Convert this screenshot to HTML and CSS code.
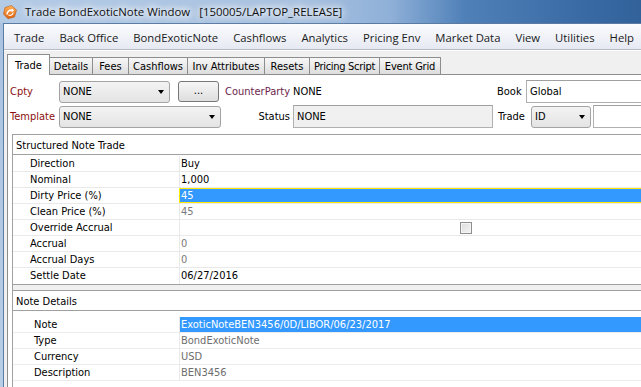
FILE: index.html
```html
<!DOCTYPE html>
<html>
<head>
<meta charset="utf-8">
<link rel="stylesheet" href="styles.css">
</head>
<body>
<div class="win">
  <div class="titlebar">
    <svg class="appicon" viewBox="0 0 16 16" width="16" height="16">
      <defs>
        <linearGradient id="og" x1="0" y1="0" x2="0" y2="1">
          <stop offset="0" stop-color="#ffb25a"/>
          <stop offset="1" stop-color="#e0620c"/>
        </linearGradient>
      </defs>
      <path d="M3 3.5 L9.5 1.5 L14.5 6 L12.5 13 L6 14.8 L1.5 10 Z" fill="url(#og)" stroke="#b85a10" stroke-width="0.6"/>
      <path d="M5 10.5 C5 7 8 5.5 11 6.5" fill="none" stroke="#fff" stroke-width="1.6"/>
      <path d="M10 4.6 L12.2 6.8 L9.4 8" fill="#fff"/>
      <path d="M11 8.5 C11 11 8.5 12 6.5 11" fill="none" stroke="#fff" stroke-width="1.2"/>
    </svg>
    <span class="title">Trade BondExoticNote Window</span>
    <span class="title2">[150005/LAPTOP_RELEASE]</span>
  </div>
  <div class="frame">
    <div class="client">
      <div class="menubar">
        <span>Trade</span><span>Back Office</span><span>BondExoticNote</span><span>Cashflows</span><span>Analytics</span><span>Pricing Env</span><span>Market Data</span><span>View</span><span>Utilities</span><span>Help</span>
      </div>
      <div class="tabarea">
        <div class="tabs">
          <div class="tab cur">Trade</div>
          <div class="tab">Details</div>
          <div class="tab">Fees</div>
          <div class="tab">Cashflows</div>
          <div class="tab">Inv Attributes</div>
          <div class="tab">Resets</div>
          <div class="tab">Pricing Script</div>
          <div class="tab last">Event Grid</div>
        </div>
        <div class="tabbody">
          <div class="form">
            <div class="frow">
              <span class="lbl red w49">Cpty</span>
              <div class="combo w111"><span>NONE</span><i class="arrow"></i></div>
              <div class="btn">...</div>
              <span class="lbl purple rlbl w74">CounterParty</span>
              <span class="val w204">NONE</span>
              <span class="lbl w29">Book</span>
              <div class="field white grow">Global</div>
            </div>
            <div class="frow">
              <span class="lbl red w49">Template</span>
              <div class="combo w162"><span>NONE</span><i class="arrow"></i></div>
              <span class="lbl rlbl w72">Status</span>
              <div class="field gray w200">NONE</div>
              <span class="lbl tlbl">Trade</span>
              <div class="combo w60"><span>ID</span><i class="arrow"></i></div>
              <div class="field white grow f2"></div>
            </div>
          </div>
          <div class="panels">
            <div class="panel p1">
              <div class="ptitle">Structured Note Trade</div>
              <div class="table t1">
                <div class="row"><div class="k">Direction</div><div class="v">Buy</div></div>
                <div class="row"><div class="k">Nominal</div><div class="v">1,000</div></div>
                <div class="row"><div class="k">Dirty Price (%)</div><div class="v selfocus">45</div></div>
                <div class="row"><div class="k">Clean Price (%)</div><div class="v dim">45</div></div>
                <div class="row"><div class="k">Override Accrual</div><div class="v center"><i class="check"></i></div></div>
                <div class="row"><div class="k">Accrual</div><div class="v dim">0</div></div>
                <div class="row"><div class="k">Accrual Days</div><div class="v dim">0</div></div>
                <div class="row"><div class="k">Settle Date</div><div class="v">06/27/2016</div></div>
              </div>
            </div>
            <div class="divider"></div>
            <div class="panel p2">
              <div class="ptitle">Note Details</div>
              <div class="table t2">
                <div class="row"><div class="k">Note</div><div class="v hl">ExoticNoteBEN3456/0D/LIBOR/06/23/2017</div></div>
                <div class="row"><div class="k">Type</div><div class="v dim2">BondExoticNote</div></div>
                <div class="row"><div class="k">Currency</div><div class="v dim2">USD</div></div>
                <div class="row"><div class="k">Description</div><div class="v dim2">BEN3456</div></div>
              </div>
            </div>
          </div>
        </div>
      </div>
    </div>
  </div>
</div>
</body>
</html>
```
FILE: styles.css
```css
* { box-sizing: border-box; }
html, body { margin: 0; padding: 0; }
body {
  width: 641px;
  height: 387px;
  overflow: hidden;
  background: #a9c3e0;
  font-family: "DejaVu Sans Condensed", "Liberation Sans", sans-serif;
  font-size: 11px;
  color: #000;
}
.win { width: 750px; }

.titlebar {
  height: 23px;
  display: flex;
  align-items: center;
  background: linear-gradient(to right, #b4cbe6 0%, #a9c2e0 40%, #8fb0d8 52%, #4f80b8 62%, #3a6aa3 78%, #2e5d96 90%, #3a6aa3 100%);
  font-family: "Open Sans", "Noto Sans", sans-serif;
  font-size: 11.4px;
  color: #111;
  white-space: nowrap;
}
.appicon { margin-left: 2px; flex: none; }
.title { margin-left: 7px; text-shadow: 0 0 6px #fff, 0 0 8px #fff, 0 0 10px #fff; }
.title2 { margin-left: 9px; text-shadow: 0 0 6px #fff, 0 0 8px #fff, 0 0 10px #fff; }

.frame { padding-left: 3px; background: linear-gradient(#a9c3e0, #b8cde6); }
.client {
  background: #f0f0f0;
  border-left: 1px solid #5b7ba3;
  border-top: 1px solid #5b7ba3;
  height: 364px;
}

.menubar {
  height: 26px;
  display: flex;
  align-items: center;
  gap: 15px;
  padding: 2px 0 0 10px;
  background: linear-gradient(#fbfcfe, #e6e9f2);
  border-bottom: 1px solid #b9bcc4;
  font-family: "Open Sans", "Noto Sans", sans-serif;
  font-size: 11.3px;
  color: #1a1a1a;
  white-space: nowrap;
}

.tabarea { padding: 3px 0 0 3px; border-top: 1px solid #fff; }
.tabs { display: flex; align-items: flex-end; height: 20px; position: relative; z-index: 1; }
.tab {
  height: 17px;
  padding-top: 1px;
  border: 1px solid #8d8d8d;
  border-right: none;
  border-bottom: none;
  background: linear-gradient(#f7f7f7, #dddddd);
  white-space: nowrap;
  line-height: 15px;
  color: #000;
  text-align: center;
  flex: none;
}
.tab:nth-child(2) { width: 42px; }
.tab:nth-child(3) { width: 36px; }
.tab:nth-child(4) { width: 59px; }
.tab:nth-child(5) { width: 77px; }
.tab:nth-child(6) { width: 45px; }
.tab:nth-child(7) { width: 70px; letter-spacing: -0.3px; }
.tab:nth-child(8) { width: 62px; letter-spacing: -0.2px; }
.tab.last { border-right: 1px solid #8d8d8d; }
.tab.cur {
  width: 43px;
  height: 21px;
  background: #fff;
  border-right: 1px solid #8d8d8d;
  padding-top: 3px;
  margin-bottom: -1px;
}
.tab.cur + .tab { border-left: none; }
.tabbody {
  background: #fff;
  border-top: 1px solid #8d8d8d;
  border-left: 1px solid #8d8d8d;
  height: 320px;
  padding: 5px 0 0 2px;
}

.form { display: flex; flex-direction: column; gap: 2px; }
.frow { display: flex; align-items: center; height: 23px; white-space: nowrap; }
.lbl { flex: none; }
.red { color: #8c0f0f; }
.purple { color: #6b1e4c; }
.rlbl { text-align: right; padding-right: 3px; }
.w49 { width: 49px; }
.w74 { width: 74px; }
.w72 { width: 72px; }
.w29 { width: 29px; }
.w111 { width: 111px; }
.w162 { width: 162px; }
.w60 { width: 60px; }
.w200 { width: 200px; }
.w204 { width: 204px; }
.tlbl { width: 38px; padding-left: 5px; }
.grow { flex: 1; }

.combo {
  flex: none;
  height: 22px;
  display: flex;
  align-items: center;
  justify-content: space-between;
  padding: 0 5px 0 3px;
  border: 1px solid #a3a3a3;
  border-radius: 3px;
  background: linear-gradient(#f3f3f3, #e4e4e4);
}
.arrow {
  width: 0; height: 0;
  border-left: 3.5px solid transparent;
  border-right: 3.5px solid transparent;
  border-top: 4px solid #000;
}
.btn {
  flex: none;
  width: 41px;
  height: 21px;
  margin-left: 8px;
  border: 1px solid #777;
  border-radius: 3px;
  background: linear-gradient(#f6f6f6, #dedede);
  text-align: center;
  line-height: 17px;
}
.val { flex: none; }
.field {
  height: 23px;
  display: flex;
  align-items: center;
  padding-left: 3px;
  border: 1px solid #b0b0b0;
  border-top-color: #a0a0a0;
}
.field.white { background: #fff; }
.field.gray { background: #f0f0f0; flex: none; }
.f2 { margin-left: 2px; }

.panels { padding: 6px 0 0 2px; }
.panel { border-left: 1px solid #a0a0a0; border-top: 1px solid #a0a0a0; background: #fff; }
.ptitle {
  height: 20px;
  padding: 4px 0 0 3px;
  border-bottom: 1px solid #a0a0a0;
}
.table { display: flex; flex-direction: column; }
.row { display: grid; grid-template-columns: 166px 1fr; height: 16px; border-bottom: 1px solid #e9e9e9; }
.k { padding-left: 17px; line-height: 15px; }
.v { border-left: 1px solid #e9e9e9; padding-left: 1px; line-height: 15px; }
.t1 { padding-top: 1px; border-bottom: 1px solid #a0a0a0; }
.t1 .row:last-child { border-bottom: none; }
.t2 { padding-top: 6px; }
.t2 .k { padding-left: 21px; }
.t2 .row { border-bottom-color: #ececec; }
.divider { height: 5px; background: #f0f0f0; border-left: 1px solid #a0a0a0; }
.p2 { height: 100px; }
.dim { color: #7a7a7a; }
.dim2 { color: #6e6e6e; }
.selfocus { background: #3399ff; color: #fff; border: 1px solid #ffea00; padding-left: 1px; line-height: 13px; }
.hl { background: #3399ff; color: #fff; }
.center { display: flex; justify-content: center; align-items: center; }
.check {
  display: block;
  width: 12px; height: 12px;
  border: 1px solid #8e8e8e;
  background: linear-gradient(135deg, #dcdcdc, #f4f4f4);
  box-shadow: inset 0 0 0 1px #f4f4f4;
}
```
